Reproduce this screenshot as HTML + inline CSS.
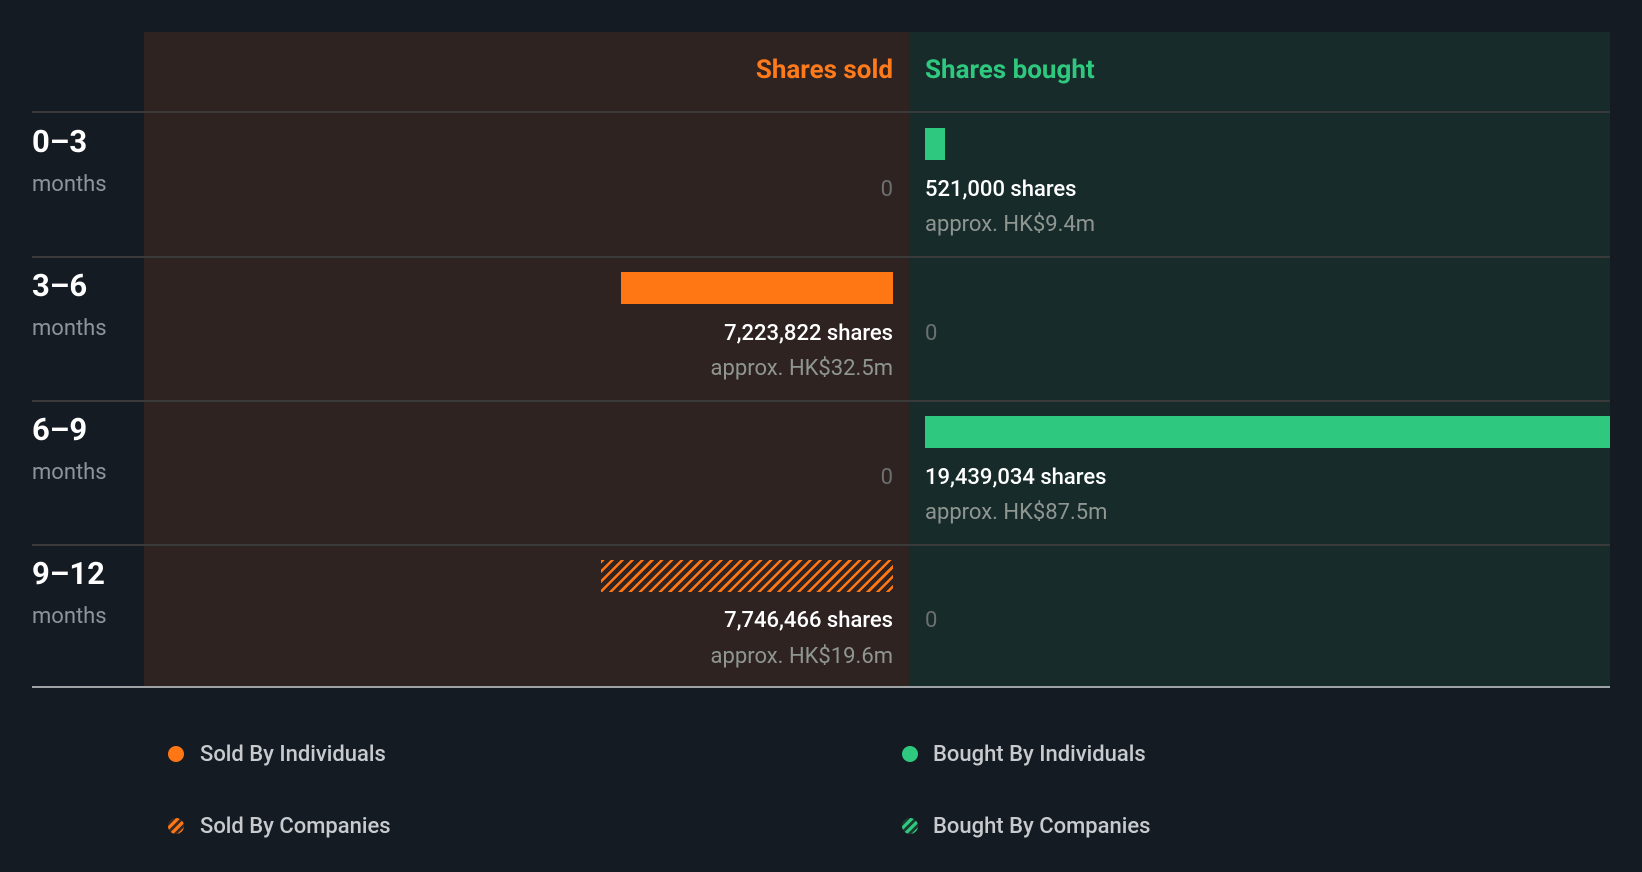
<!DOCTYPE html>
<html><head><meta charset="utf-8"><style>
*{margin:0;padding:0;box-sizing:border-box}
body{width:1642px;height:872px;background:#151b23;font-family:Roboto,"Liberation Sans",sans-serif;position:relative;overflow:hidden;color:#fff}
.a{position:absolute}
.lp{left:144px;width:765px;top:32px;height:655px;background:#2e2321}
.rp{left:909px;width:701px;top:32px;height:655px;background:#182b2b}
.hl{left:32px;width:1578px;height:2px;background:#3b3a3a}
.h{font-size:26px;font-weight:bold;top:54px;line-height:32px}
.rl{left:32px;font-size:31px;font-weight:bold;line-height:36px}
.mo{left:32px;font-size:22px;color:#8d949c;line-height:26px}
.t{font-size:22px;line-height:26px;white-space:nowrap;font-weight:500}
.L{right:749px;text-align:right}
.R{left:925px}
.g{color:#8f9691;font-weight:400}
.z{color:#6c706f;font-weight:400}
.lg{font-size:22px;color:#c8cbce;line-height:26px;font-weight:500}
.dot{width:16px;height:16px;border-radius:50%}
</style></head><body>
<div class="a lp"></div><div class="a rp"></div>
<div class="a h" style="right:749px;color:#ff7a1a">Shares sold</div>
<div class="a h" style="left:925px;color:#2ec97e">Shares bought</div>
<div class="a hl" style="top:111px"></div>
<div class="a hl" style="top:256px"></div>
<div class="a hl" style="top:400px"></div>
<div class="a hl" style="top:544px"></div>
<div class="a" style="left:32px;width:1578px;height:2px;top:686px;background:#9fa3a6"></div>

<div class="a rl" style="top:124px">0–3</div><div class="a mo" style="top:172px">months</div>
<div class="a rl" style="top:268px">3–6</div><div class="a mo" style="top:316px">months</div>
<div class="a rl" style="top:412px">6–9</div><div class="a mo" style="top:460px">months</div>
<div class="a rl" style="top:556px">9–12</div><div class="a mo" style="top:604px">months</div>

<!-- row 1 -->
<div class="a" style="left:925px;top:128px;width:20px;height:32px;background:#2ec97e"></div>
<div class="a t L z" style="top:177px">0</div>
<div class="a t R" style="top:177px">521,000 shares</div>
<div class="a t R g" style="top:212px">approx. HK$9.4m</div>
<!-- row 2 -->
<div class="a" style="left:621px;top:272px;width:272px;height:32px;background:#ff7715"></div>
<div class="a t L" style="top:321px">7,223,822 shares</div>
<div class="a t L g" style="top:356px">approx. HK$32.5m</div>
<div class="a t R z" style="top:321px">0</div>
<!-- row 3 -->
<div class="a" style="left:925px;top:416px;width:685px;height:32px;background:#2ec97e"></div>
<div class="a t L z" style="top:465px">0</div>
<div class="a t R" style="top:465px">19,439,034 shares</div>
<div class="a t R g" style="top:500px">approx. HK$87.5m</div>
<!-- row 4 -->
<div class="a" style="left:601px;top:560px;width:292px;height:32px;background:repeating-linear-gradient(135deg,#ff7715 0 2.5px,transparent 2.5px 7px)"></div>
<div class="a t L" style="top:608px">7,746,466 shares</div>
<div class="a t L g" style="top:644px">approx. HK$19.6m</div>
<div class="a t R z" style="top:608px">0</div>

<!-- legend -->
<div class="a dot" style="left:168px;top:746px;background:#ff7715"></div>
<div class="a lg" style="left:200px;top:742px">Sold By Individuals</div>
<div class="a dot" style="left:168px;top:818px;background:repeating-linear-gradient(135deg,#ff7715 0 3px,#3a2a22 3px 6px)"></div>
<div class="a lg" style="left:200px;top:814px">Sold By Companies</div>
<div class="a dot" style="left:902px;top:746px;background:#2ec97e"></div>
<div class="a lg" style="left:933px;top:742px">Bought By Individuals</div>
<div class="a dot" style="left:902px;top:818px;background:repeating-linear-gradient(135deg,#2ec97e 0 3px,#1d3a30 3px 6px)"></div>
<div class="a lg" style="left:933px;top:814px">Bought By Companies</div>
</body></html>
